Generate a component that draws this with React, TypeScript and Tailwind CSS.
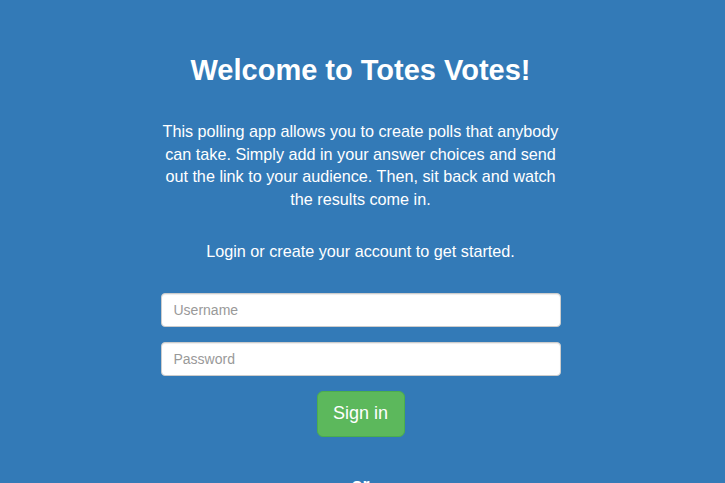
export default function App() {
  return (
    <div className="min-h-screen bg-[#337ab7] font-['Liberation_Sans',Arial,sans-serif] text-white">
      <div className="mx-auto w-[400px] -translate-x-[2px] pt-[54px] text-center">
        <h1 className="text-[29px] font-bold leading-[32px]">Welcome to Totes Votes!</h1>
        <p className="mt-[34px] text-[16.2px] leading-[22.5px]">
          This polling app allows you to create polls that anybody can take. Simply add in your answer
          choices and send out the link to your audience. Then, sit back and watch the results come in.
        </p>
        <p className="mt-[30px] text-[16.2px] leading-[22.5px]">Login or create your account to get started.</p>
        <form className="mt-[30px] flex flex-col items-center gap-[15px]" onSubmit={(e) => e.preventDefault()}>
          <input
            type="text"
            placeholder="Username"
            className="h-[34px] w-full rounded border border-[#ccc] bg-white px-3 text-[14px] text-[#555] placeholder:text-[#999] shadow-[inset_0_1px_1px_rgba(0,0,0,0.075)] outline-none"
          />
          <input
            type="password"
            placeholder="Password"
            className="h-[34px] w-full rounded border border-[#ccc] bg-white px-3 text-[14px] text-[#555] placeholder:text-[#999] shadow-[inset_0_1px_1px_rgba(0,0,0,0.075)] outline-none"
          />
          <button
            type="submit"
            className="h-[46px] w-[88px] rounded-md border border-[#4cae4c] bg-[#5cb85c] text-[18px] text-white"
          >
            Sign in
          </button>
        </form>
        <p className="mt-[38px] text-[18px] font-bold leading-[20px]">or</p>
      </div>
    </div>
  )
}
